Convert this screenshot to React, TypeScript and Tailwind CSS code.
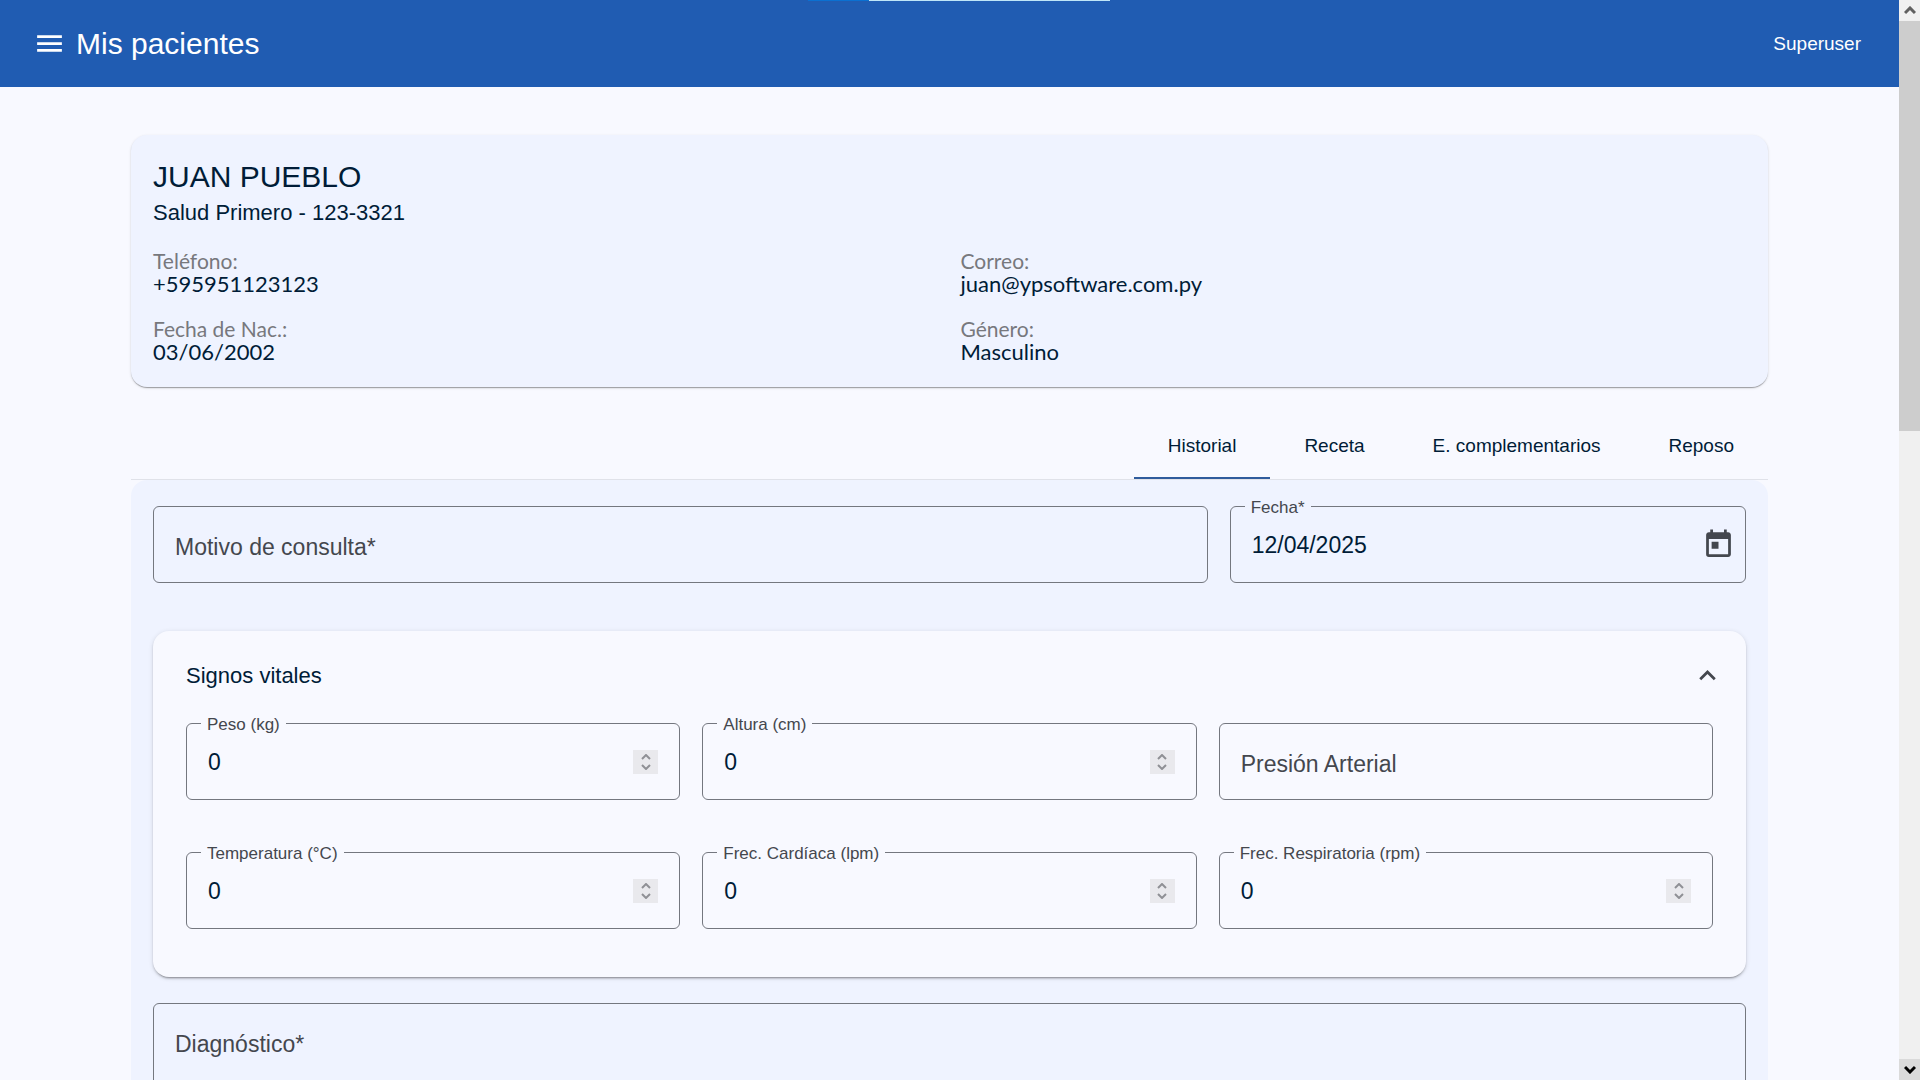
import React, { useState } from 'react';
import { MdExpandLess, MdMenu, MdToday } from 'react-icons/md';

interface FieldProps {
  id: string;
  label: string;
  value?: string;
  type?: string;
  surface?: string;
  className?: string;
  children?: React.ReactNode;
}

const Spinner = () => (
  <div className="flex flex-col w-[25px] h-6 bg-[#e9e9ed] text-[#8f9095]">
    <button type="button" aria-label="Aumentar" className="flex-1 flex items-end justify-center pb-[2px]">
      <svg width="10" height="6" viewBox="0 0 10 6" fill="none" stroke="currentColor" strokeWidth="2">
        <path d="M1 5l4-4 4 4" />
      </svg>
    </button>
    <button type="button" aria-label="Disminuir" className="flex-1 flex items-start justify-center pt-[2px]">
      <svg width="10" height="6" viewBox="0 0 10 6" fill="none" stroke="currentColor" strokeWidth="2">
        <path d="M1 1l4 4 4-4" />
      </svg>
    </button>
  </div>
);

const Field: React.FC<FieldProps> = ({
  id,
  label,
  value: initial = '',
  type = 'text',
  surface = 'bg-[#f8f9ff]',
  className = '',
  children,
}) => {
  const [value, setValue] = useState(initial);

  return (
    <div className={`relative flex items-center h-[77px] px-[21px] border border-[#74777f] rounded-md ${className}`}>
      <label
        htmlFor={id}
        className={
          value
            ? `absolute left-[14px] -top-[9px] px-[6px] text-[17px] leading-5 text-[#44474e] ${surface}`
            : 'absolute left-[21px] top-[25px] text-[23px] leading-[30px] text-[#44474e] pointer-events-none'
        }
      >
        {label}
      </label>
      <input
        id={id}
        type={type}
        value={value}
        onChange={(e) => setValue(e.target.value)}
        className="flex-1 min-w-0 bg-transparent text-[23px] leading-[30px] outline-none [appearance:textfield]"
      />
      {type === 'number' && <Spinner />}
      {children}
    </div>
  );
};

const Dato = ({ label, value }: { label: string; value: string }) => (
  <div>
    <dt className="text-[21px] leading-[23px] text-[#77787d]">{label}</dt>
    <dd className="text-[22px] leading-[23px]">{value}</dd>
  </div>
);

const tabs = ['Historial', 'Receta', 'E. complementarios', 'Reposo'];

const Scrollbar = () => (
  <div aria-hidden="true" className="flex flex-col w-[21px] shrink-0 bg-[#f0f0f0]">
    <div className="flex items-center justify-center h-[21px] text-[#606060]">
      <svg width="12" height="9" viewBox="0 0 12 9" fill="none" stroke="currentColor" strokeWidth="3">
        <path d="M1 7l5-5 5 5" />
      </svg>
    </div>
    <div className="flex-1">
      <div className="h-[39.5%] bg-[#cdcdcd]" />
    </div>
    <div className="flex items-center justify-center h-[21px] bg-[#dadada] text-black">
      <svg width="12" height="9" viewBox="0 0 12 9" fill="none" stroke="currentColor" strokeWidth="3">
        <path d="M1 2l5 5 5-5" />
      </svg>
    </div>
  </div>
);

export const App: React.FC = () => {
  const [activeTab, setActiveTab] = useState('Historial');
  const [open, setOpen] = useState(true);

  return (
    <div className="relative flex h-screen overflow-hidden bg-[#f8f9ff] text-[#001c37] font-['Liberation_Sans',Arial,sans-serif]">
      <div className="absolute top-0 left-[808px] flex h-px w-[302px]">
        <div className="w-[61px] bg-[#0b70d1]" />
        <div className="flex-1 bg-[#bfe6f8]" />
      </div>

      <div className="flex-1 min-w-0 flex flex-col">
        <header className="flex items-center justify-between h-[87px] shrink-0 pl-[33px] pr-[38px] bg-[#205cb2] text-white">
          <div className="flex items-center gap-[10px]">
            <button type="button" aria-label="Menú">
              <MdMenu size={33} />
            </button>
            <h1 className="text-[30px] leading-10">Mis pacientes</h1>
          </div>
          <button type="button" className="text-[19px] leading-7">Superuser</button>
        </header>

        <main className="flex-1 min-h-0 overflow-hidden px-[131px] pt-12">
          <section className="px-[22px] pt-[22px] pb-6 rounded-2xl bg-[#eff3ff] shadow-[0_2px_1px_-1px_rgba(0,0,0,0.2),0_1px_1px_rgba(0,0,0,0.14),0_1px_3px_rgba(0,0,0,0.12)]">
            <h2 className="text-[30px] leading-10">JUAN PUEBLO</h2>
            <p className="text-[22px] leading-8">Salud Primero - 123-3321</p>
            <dl className="grid grid-cols-2 gap-[22px] mt-5 font-['Lato',sans-serif]">
              <Dato label="Teléfono:" value="+595951123123" />
              <Dato label="Correo:" value="juan@ypsoftware.com.py" />
              <Dato label="Fecha de Nac.:" value="03/06/2002" />
              <Dato label="Género:" value="Masculino" />
            </dl>
          </section>

          <div role="tablist" className="flex justify-end mt-[26px] border-b border-[#e0e2e9]">
            {tabs.map((tab) => (
              <button
                key={tab}
                type="button"
                role="tab"
                aria-selected={tab === activeTab}
                onClick={() => setActiveTab(tab)}
                className={`h-[66px] px-[34px] text-[19px] border-y-2 border-t-transparent ${
                  tab === activeTab ? 'border-b-[#2f5c9c]' : 'border-b-transparent'
                }`}
              >
                {tab}
              </button>
            ))}
          </div>

          <form className="px-[22px] pt-[26px] rounded-2xl bg-[#eff3ff]">
            <div className="grid grid-cols-3 gap-[22px]">
              <Field id="motivo" label="Motivo de consulta*" className="col-span-2" />
              <Field id="fecha" label="Fecha*" value="12/04/2025" surface="bg-[#eff3ff]">
                <button type="button" aria-label="Abrir calendario" className="-mr-[11px] text-[#44474e]">
                  <MdToday size={33} />
                </button>
              </Field>
            </div>

            <section className="mt-12 px-[33px] pb-12 rounded-2xl bg-[#f8f9ff] shadow-[0_3px_1px_-2px_rgba(0,0,0,0.2),0_2px_2px_rgba(0,0,0,0.14),0_1px_5px_rgba(0,0,0,0.12)]">
              <button
                type="button"
                aria-expanded={open}
                onClick={() => setOpen(!open)}
                className="flex items-center justify-between w-full h-[88px] text-[22px]"
              >
                Signos vitales
                <MdExpandLess size={33} className="-mr-[11px] text-[#44474e]" />
              </button>
              {open && (
                <div className="grid grid-cols-3 gap-x-[22px] gap-y-[52px] pt-1">
                  <Field id="peso" label="Peso (kg)" type="number" value="0" />
                  <Field id="altura" label="Altura (cm)" type="number" value="0" />
                  <Field id="presion" label="Presión Arterial" />
                  <Field id="temperatura" label="Temperatura (°C)" type="number" value="0" />
                  <Field id="cardiaca" label="Frec. Cardíaca (lpm)" type="number" value="0" />
                  <Field id="respiratoria" label="Frec. Respiratoria (rpm)" type="number" value="0" />
                </div>
              )}
            </section>

            <div className="relative mt-[26px]">
              <label
                htmlFor="diagnostico"
                className="absolute left-[22px] top-[26px] text-[23px] leading-[30px] text-[#44474e] pointer-events-none"
              >
                Diagnóstico*
              </label>
              <textarea
                id="diagnostico"
                rows={5}
                className="block w-full px-[21px] py-6 border border-[#74777f] rounded-md bg-transparent text-[23px] leading-[30px] outline-none resize-none"
              />
            </div>
          </form>
        </main>
      </div>

      <Scrollbar />
    </div>
  );
};

export default App;
